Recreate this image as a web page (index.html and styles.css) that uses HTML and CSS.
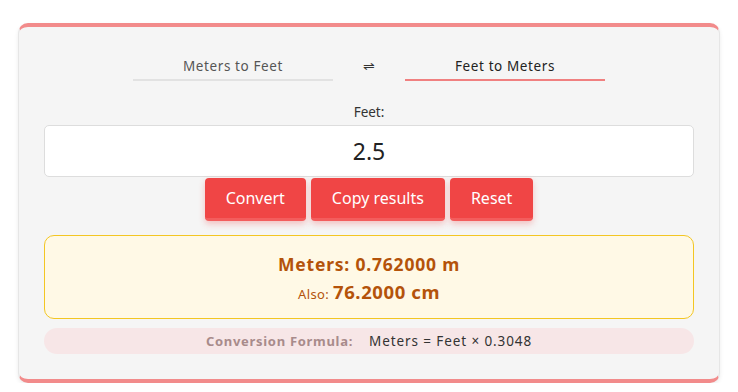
FILE: index.html
```html
<!DOCTYPE html>
<html lang="en">
<head>
    <meta charset="UTF-8">
    <meta name="viewport" content="width=device-width, initial-scale=1.0">
    <title>Feet to Meters Converter</title>
    <link rel="stylesheet" href="styles.css">
</head>
<body>

    <div class="converter">
        <div class="tabs">
            <div class="tab">Meters to Feet</div>
            <div class="swap">&#8652;</div>
            <div class="tab active">Feet to Meters</div>
        </div>

        <label class="field-label" for="feet">Feet:</label>
        <input id="feet" class="field-input" type="text" value="2.5">

        <div class="actions">
            <button class="btn">Convert</button>
            <button class="btn">Copy results</button>
            <button class="btn">Reset</button>
        </div>

        <div class="result">
            <p class="result-main">Meters: 0.762000 m</p>
            <p class="result-also">Also: <strong>76.2000 cm</strong></p>
        </div>

        <div class="formula">
            <span class="formula-label">Conversion Formula:</span>
            <span class="formula-text">Meters = Feet &times; 0.3048</span>
        </div>
    </div>

</body>
</html>
```

FILE: styles.css
```css
body {
    font-family: "Noto Sans", "Open Sans", sans-serif;
    margin: 0;
    padding: 23px 18px 0;
    background-color: #fff;
    color: #222;
}

.converter {
    background-color: #f5f5f5;
    border: 1px solid #e6e6e6;
    border-top: 4px solid #f28b8b;
    border-bottom: 4px solid #f28b8b;
    border-radius: 10px;
    box-shadow: 0 2px 4px rgba(0, 0, 0, 0.08);
    padding: 23px 25px 25px;
    display: flex;
    flex-direction: column;
    align-items: stretch;
}

.tabs {
    display: flex;
    justify-content: center;
    align-items: flex-start;
    margin-bottom: 22px;
}

.tab {
    width: 200px;
    text-align: center;
    font-size: 13.5px;
    color: #555;
    padding: 7px 0 4px;
    border-bottom: 2px solid #e2e2e2;
    letter-spacing: 0.6px;
}

.tab.active {
    color: #222;
    border-bottom-color: #f08080;
}

.swap {
    width: 72px;
    text-align: center;
    font-size: 14px;
    padding-top: 6px;
    color: #333;
}

.field-label {
    text-align: center;
    font-size: 13.5px;
    color: #333;
    margin-bottom: 4px;
}

.field-input {
    height: 52px;
    box-sizing: border-box;
    border: 1px solid #ddd;
    border-radius: 5px;
    background: #fff;
    text-align: center;
    font-family: inherit;
    font-size: 23px;
    color: #222;
    outline: none;
    margin-bottom: 1px;
}

.actions {
    display: flex;
    justify-content: center;
    gap: 5px;
    margin-bottom: 14px;
}

.btn {
    background-color: #f04545;
    color: #fff;
    border: none;
    border-bottom: 3px solid #f35d5d;
    border-radius: 4px;
    font-family: inherit;
    font-size: 16px;
    height: 43px;
    padding: 0 21px;
    box-shadow: 0 3px 6px rgba(240, 69, 69, 0.3);
}

.result {
    background-color: #fff9e6;
    border: 1px solid #f3c623;
    border-radius: 10px;
    text-align: center;
    color: #b4530a;
    padding: 16px 0 14px;
    margin-bottom: 9px;
}

.result p {
    margin: 0;
}

.result-main {
    font-size: 17.5px;
    font-weight: bold;
    letter-spacing: 0.8px;
    margin-bottom: 3px !important;
}

.result-also {
    font-size: 13px;
    letter-spacing: 0.4px;
}

.result-also strong {
    font-size: 18.5px;
    letter-spacing: 0.6px;
}

.formula {
    background-color: #f7e6e7;
    border-radius: 13px;
    height: 26px;
    display: flex;
    justify-content: center;
    align-items: center;
    gap: 16px;
}

.formula-label {
    font-size: 13px;
    font-weight: bold;
    color: #a88b8b;
    letter-spacing: 0.7px;
}

.formula-text {
    font-size: 13.5px;
    color: #333;
    letter-spacing: 0.9px;
}
```
